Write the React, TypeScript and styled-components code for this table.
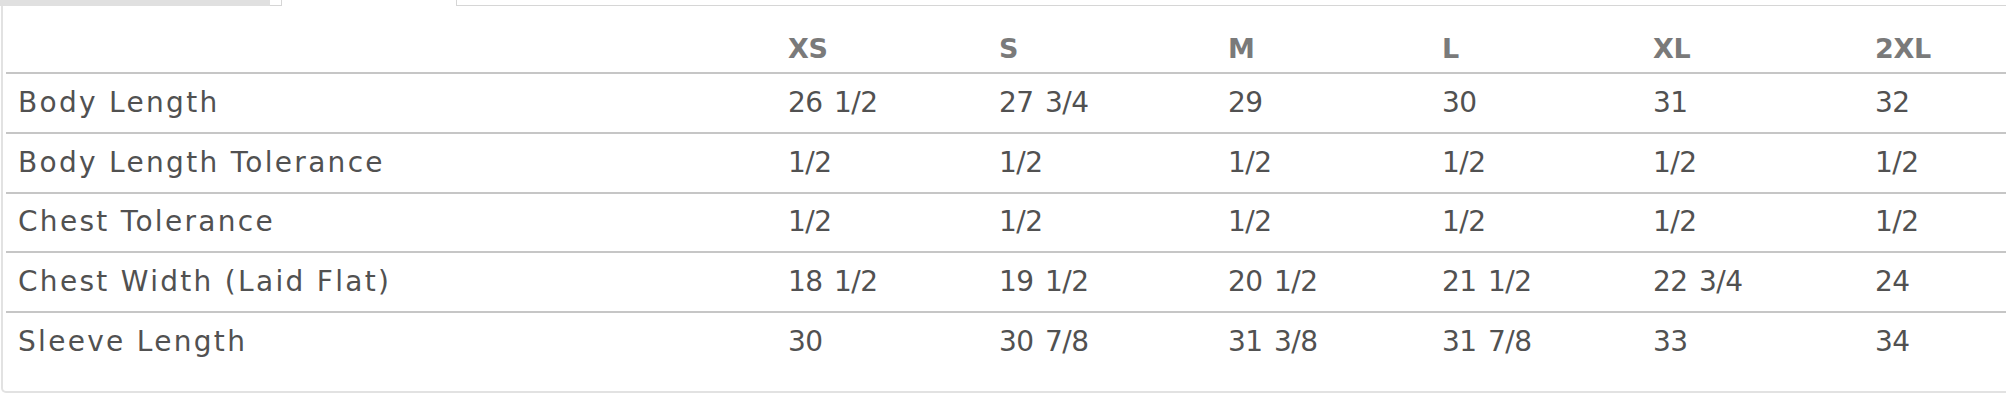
import React from 'react'
import styled, { createGlobalStyle } from 'styled-components'

const GlobalStyle = createGlobalStyle`
  html, body {
    margin: 0;
    padding: 0;
    background: #fff;
    overflow: hidden;
  }
  body {
    font-family: 'DejaVu Sans', 'Liberation Sans', sans-serif;
  }
`

const Page = styled.div`
  width: 2006px;
  height: 406px;
  overflow: hidden;
`

const TabBar = styled.div`
  display: flex;
  height: 6px;
`

const Tab = styled.div<{ $kind: 'muted' | 'edge' | 'active' | 'rest' }>`
  box-sizing: border-box;
  height: 6px;
  background: ${p => (p.$kind === 'muted' ? '#e0e0e0' : '#fff')};
  width: ${p => (p.$kind === 'muted' ? '270px' : p.$kind === 'edge' ? '12px' : p.$kind === 'active' ? '175px' : 'auto')};
  flex: ${p => (p.$kind === 'rest' ? '1' : 'none')};
  border-bottom: ${p => (p.$kind === 'edge' || p.$kind === 'rest' ? '1px solid #d6d6d6' : 'none')};
  border-right: ${p => (p.$kind === 'edge' || p.$kind === 'active' ? '1px solid #d6d6d6' : 'none')};
`

const Panel = styled.div`
  box-sizing: border-box;
  width: 2040px;
  margin-left: 1px;
  border: 2px solid #e2e2e2;
  border-top: none;
  border-radius: 0 0 0 5px;
  padding: 0 0 19px 3px;
`

const Table = styled.table`
  border-collapse: collapse;
  table-layout: fixed;
  width: 2034px;
`

const HeadRow = styled.tr`
  height: 67px;
`

const BodyRow = styled.tr`
  height: 59.75px;
  border-top: 2px solid #c6c6c6;
`

const HeadCell = styled.th`
  padding: 0 0 10px 12px;
  vertical-align: bottom;
  text-align: left;
  font-size: 27px;
  font-weight: 700;
  color: #7a7a7a;
  line-height: 1;
  letter-spacing: -0.3px;
`

const LabelCell = styled.td`
  padding: 0 0 0 12px;
  font-size: 28px;
  color: #515151;
  letter-spacing: 2.3px;
  white-space: nowrap;
  line-height: 1;
`

const ValueCell = styled.td`
  padding: 0 0 0 12px;
  font-size: 28px;
  color: #515151;
  letter-spacing: -0.5px;
  word-spacing: 3px;
  white-space: nowrap;
  line-height: 1;
`

const columns = [770, 211, 229, 214, 211, 222, 177]
const sizes = ['XS', 'S', 'M', 'L', 'XL', '2XL']

const rows: { label: string; values: string[] }[] = [
  { label: 'Body Length', values: ['26 1/2', '27 3/4', '29', '30', '31', '32'] },
  { label: 'Body Length Tolerance', values: ['1/2', '1/2', '1/2', '1/2', '1/2', '1/2'] },
  { label: 'Chest Tolerance', values: ['1/2', '1/2', '1/2', '1/2', '1/2', '1/2'] },
  { label: 'Chest Width (Laid Flat)', values: ['18 1/2', '19 1/2', '20 1/2', '21 1/2', '22 3/4', '24'] },
  { label: 'Sleeve Length', values: ['30', '30 7/8', '31 3/8', '31 7/8', '33', '34'] },
]

const App: React.FC = () => {
  return (
    <Page>
      <GlobalStyle />
      <TabBar>
        <Tab $kind='muted' />
        <Tab $kind='edge' />
        <Tab $kind='active' />
        <Tab $kind='rest' />
      </TabBar>
      <Panel>
        <Table>
          <colgroup>
            {columns.map((w, i) => (
              <col key={i} style={{ width: w }} />
            ))}
          </colgroup>
          <thead>
            <HeadRow>
              <HeadCell />
              {sizes.map(s => (
                <HeadCell key={s}>{s}</HeadCell>
              ))}
            </HeadRow>
          </thead>
          <tbody>
            {rows.map(row => (
              <BodyRow key={row.label}>
                <LabelCell>{row.label}</LabelCell>
                {row.values.map((v, i) => (
                  <ValueCell key={i}>{v}</ValueCell>
                ))}
              </BodyRow>
            ))}
          </tbody>
        </Table>
      </Panel>
    </Page>
  )
}

export default App
